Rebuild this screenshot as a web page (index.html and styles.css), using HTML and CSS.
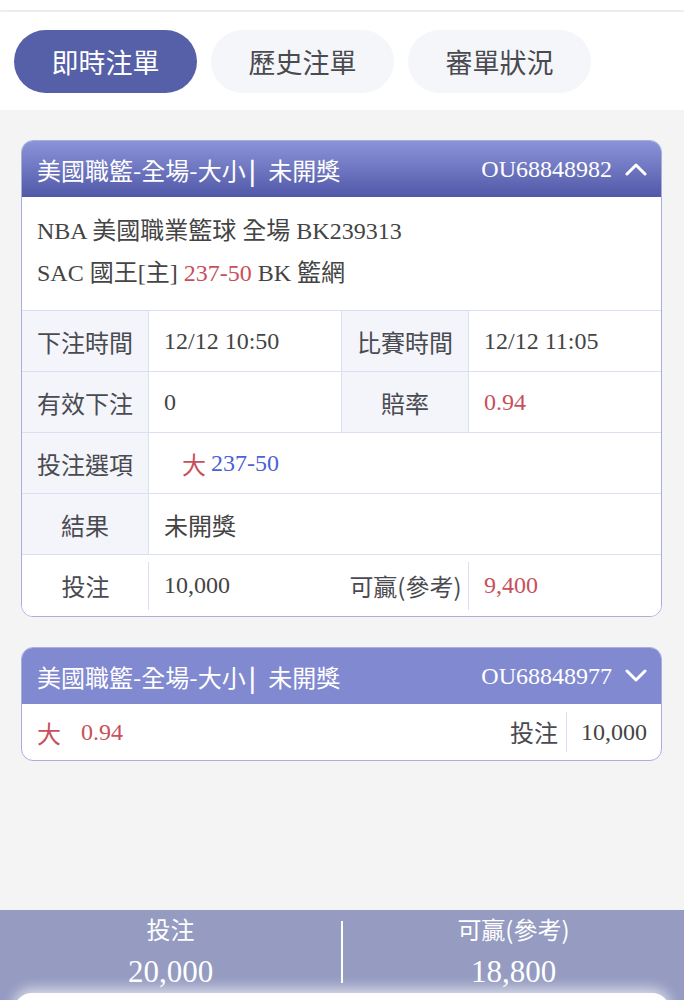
FILE: index.html
```html
<!DOCTYPE html>
<html lang="zh-Hant">
<head>
<meta charset="utf-8">
<link rel="stylesheet" href="styles.css">
</head>
<body>
<div class="topstrip"></div>
<nav class="tabs">
  <div class="tab active">即時注單</div>
  <div class="tab">歷史注單</div>
  <div class="tab">審單狀況</div>
</nav>

<main class="list">
  <section class="card open">
    <header class="card-head grad">
      <div class="title">美國職籃-全場-大小<b class="bar">|</b> 未開獎</div>
      <div class="code">OU68848982
        <svg class="chev" viewBox="0 0 22 14" width="22" height="14"><path d="M2 12 L11 3 L20 12" fill="none" stroke="#fff" stroke-width="3" stroke-linecap="round" stroke-linejoin="round"/></svg>
      </div>
    </header>
    <div class="info">
      <div>NBA 美國職業籃球 全場 BK239313</div>
      <div>SAC 國王[主] <span class="red">237-50</span> BK 籃網</div>
    </div>
    <div class="grid">
      <div class="lab">下注時間</div><div class="val">12/12 10:50</div>
      <div class="lab">比賽時間</div><div class="val">12/12 11:05</div>

      <div class="lab">有效下注</div><div class="val">0</div>
      <div class="lab">賠率</div><div class="val is-red">0.94</div>

      <div class="lab">投注選項</div><div class="val span3 opt"><span class="red cjk">大</span> <span class="blue">237-50</span></div>

      <div class="lab">結果</div><div class="val span3 cjkval">未開獎</div>

      <div class="lab plain">投注</div><div class="val plain">10,000</div>
      <div class="lab plain">可贏(參考)</div><div class="val plain is-red">9,400</div>
    </div>
  </section>

  <section class="card">
    <header class="card-head flat">
      <div class="title">美國職籃-全場-大小<b class="bar">|</b> 未開獎</div>
      <div class="code">OU68848977
        <svg class="chev" viewBox="0 0 22 14" width="22" height="14"><path d="M2 2 L11 11 L20 2" fill="none" stroke="#fff" stroke-width="3" stroke-linecap="round" stroke-linejoin="round"/></svg>
      </div>
    </header>
    <div class="summary">
      <div class="sum-left"><span class="red cjk">大</span><span class="red">0.94</span></div>
      <div class="sum-right"><span class="sum-lab">投注</span><span class="sum-val">10,000</span></div>
    </div>
  </section>
</main>

<footer class="totals">
  <div class="tot">
    <div class="tot-lab">投注</div>
    <div class="tot-val">20,000</div>
  </div>
  <div class="tot-div"></div>
  <div class="tot">
    <div class="tot-lab">可贏(參考)</div>
    <div class="tot-val">18,800</div>
  </div>
  <div class="sheet"></div>
</footer>
</body>
</html>
```

FILE: styles.css
```css
* { box-sizing: border-box; }
html, body { margin: 0; padding: 0; }
body {
  width: 684px;
  height: 1000px;
  overflow: hidden;
  background: #f4f4f5;
  font-family: "Liberation Serif", "Noto Sans CJK TC", serif;
  color: #444;
  display: flex;
  flex-direction: column;
}
.topstrip {
  height: 10px;
  background: #fff;
  margin: 0 0 2px;
  box-shadow: 0 2px 8px rgba(0,0,0,0.06);
}
.tabs {
  height: 98px;
  background: #fff;
  display: flex;
  align-items: center;
  gap: 14px;
  padding: 0 14px;
}
.tab {
  width: 183px;
  height: 63px;
  border-radius: 32px;
  background: #f5f6fa;
  color: #4a4a50;
  font-family: "Noto Sans CJK TC", sans-serif;
  font-size: 27px;
  display: flex;
  align-items: center;
  justify-content: center;
}
.tab.active {
  background: #5560a8;
  color: #fff;
}
.list {
  display: flex;
  flex-direction: column;
  gap: 30px;
  padding: 30px 22px 0 21px;
  flex: 1;
}
.card {
  background: #fff;
  border: 1.5px solid #a9aedc;
  border-radius: 12px;
  overflow: hidden;
}
.card-head {
  height: 56px;
  display: flex;
  align-items: center;
  justify-content: space-between;
  padding: 0 14px 0 15px;
  color: #fff;
  font-size: 24px;
}
.card-head.grad { background: linear-gradient(#8b94d8, #5158a8); }
.card-head.flat { background: #8189d1; }
.title { font-family: "Noto Sans CJK TC", sans-serif; }
.bar { font-weight: 700; margin: 0 7px 0 3px; }
.code { display: flex; align-items: center; gap: 13px; }
.chev { display: block; }
.info {
  padding: 13px 15px 16px;
  font-size: 24px;
  line-height: 42px;
  color: #444;
  border-bottom: 1.5px solid #dcdff2;
}
.red, .val.is-red { color: #c8505c; }
.blue { color: #4a62d6; }
.cjk, .cjkval { font-family: "Noto Sans CJK TC", sans-serif; }
.grid {
  display: grid;
  grid-template-columns: 127px 193px 127px 1fr;
  grid-auto-rows: 61px;
}
.lab {
  background: #f3f5fb;
  display: flex;
  align-items: center;
  justify-content: center;
  font-family: "Noto Sans CJK TC", sans-serif;
  font-size: 24px;
  color: #4a4a50;
  border-right: 1.5px solid #dcdff2;
  border-bottom: 1.5px solid #dcdff2;
}
.val {
  display: flex;
  align-items: center;
  padding-left: 15px;
  font-size: 24px;
  color: #444;
  border-right: 1.5px solid #dcdff2;
  border-bottom: 1.5px solid #dcdff2;
}
.val:nth-child(4n) { border-right: none; }
.val.span3 { grid-column: span 3; border-right: none; }
.val.opt { padding-left: 33px; gap: 5px; }
.lab.plain, .val.plain { background: #fff; border-bottom: none; border-right: none; }
.lab.plain { position: relative; }
.lab.plain::after {
  content: "";
  position: absolute;
  right: 0;
  top: 7px;
  bottom: 6px;
  width: 1.5px;
  background: #dcdff2;
}
.summary {
  height: 56px;
  display: flex;
  align-items: center;
  justify-content: space-between;
  padding: 0 14px 0 15px;
  font-size: 24px;
}
.sum-left { display: flex; align-items: center; gap: 20px; }
.sum-right { display: flex; align-items: center; }
.sum-lab {
  font-family: "Noto Sans CJK TC", sans-serif;
  color: #4a4a50;
  padding-right: 8px;
  border-right: 1.5px solid #dcdff2;
  line-height: 40px;
}
.sum-val { padding-left: 14px; color: #444; }
.totals {
  height: 90px;
  background: #959bc1;
  display: flex;
  position: relative;
  color: #fff;
}
.tot {
  flex: 1;
  display: flex;
  flex-direction: column;
  align-items: center;
  padding-top: 4px;
}
.tot-lab {
  font-family: "Noto Sans CJK TC", sans-serif;
  font-size: 24px;
  line-height: 30px;
}
.tot-val { font-size: 31px; line-height: 40px; margin-top: 8px; }
.tot-div {
  width: 2px;
  background: #fff;
  margin: 11px 0 17px;
}
.sheet {
  position: absolute;
  left: 14px;
  right: 14px;
  top: 83px;
  height: 40px;
  background: #fff;
  border-radius: 18px;
  box-shadow: 0 -4px 14px rgba(255,255,255,0.7);
}
```
